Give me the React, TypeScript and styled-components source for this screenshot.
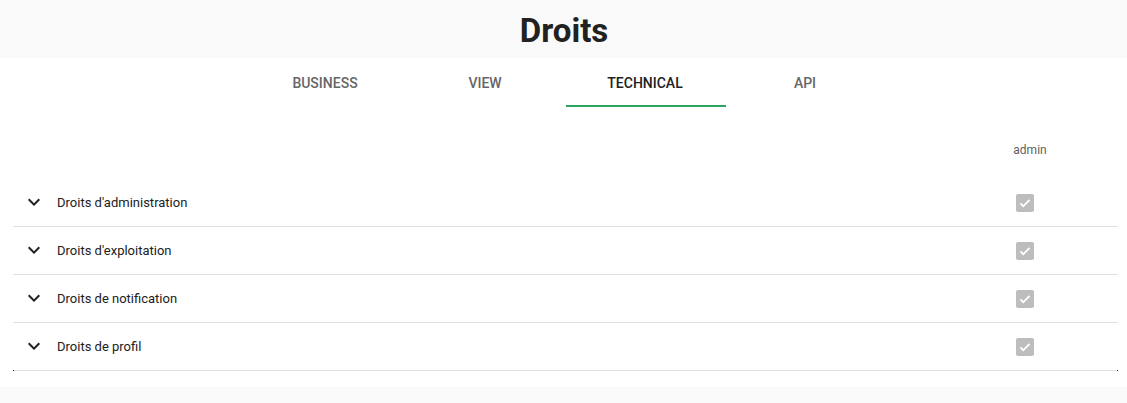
import React from "react";
import styled, { createGlobalStyle } from "styled-components";

const tabs = ["Business", "View", "Technical", "API"];
const rights = [
    "Droits d'administration",
    "Droits d'exploitation",
    "Droits de notification",
    "Droits de profil",
];

const GlobalStyle = createGlobalStyle`
  body {
    margin: 0;
    background: #fafafa;
    font-family: Roboto, "Liberation Sans", sans-serif;
  }
`;

const ExpandIcon = () => (
    <svg width="24" height="24" viewBox="0 0 24 24" fill="#212121">
        <path d="M16.59 8.59L12 13.17 7.41 8.59 6 10l6 6 6-6z" />
    </svg>
);

export default function App() {
    const active = 2;
    return (
        <>
            <GlobalStyle />
            <Header>
                <Title>Droits</Title>
            </Header>
            <Panel>
                <Tabs>
                    {tabs.map((tab, index) => (
                        <Tab key={tab} active={index === active}>{tab}</Tab>
                    ))}
                </Tabs>
                <Table>
                    <HeadRow>
                        <Spacer />
                        <ProfileCell>admin</ProfileCell>
                    </HeadRow>
                    {rights.map((right) => (
                        <Row key={right}>
                            <Label>
                                <ExpandIcon />
                                <span>{right}</span>
                            </Label>
                            <ProfileCell>
                                <Checkbox>
                                    <svg width="14" height="14" viewBox="0 0 24 24" fill="none" stroke="#fff" strokeWidth="3">
                                        <path d="M4 12.5l5 5L20 6.5" />
                                    </svg>
                                </Checkbox>
                            </ProfileCell>
                        </Row>
                    ))}
                    <TableEnd />
                </Table>
            </Panel>
        </>
    );
}

const Header = styled.header`
  height: 58px;
  display: flex;
  align-items: center;
  justify-content: center;
  background: #f9f9f9;
`;
const Title = styled.h1`
  margin: 0;
  padding: 3px 0 0 1px;
  font-size: 33px;
  font-weight: 700;
  color: #212121;
`;
const Panel = styled.main`
  background: #fff;
  padding-bottom: 16px;
`;
const Tabs = styled.nav`
  display: flex;
  justify-content: center;
  padding-left: 5px;
`;
const Tab = styled.div<{ active?: boolean }>`
  width: 160px;
  height: 49px;
  padding: 2px 2px 0 0;
  box-sizing: border-box;
  display: flex;
  align-items: center;
  justify-content: center;
  font-size: 14px;
  font-weight: 500;
  text-transform: uppercase;
  color: ${(p) => (p.active ? "#212121" : "#666")};
  border-bottom: 2px solid ${(p) => (p.active ? "#2aa55f" : "transparent")};
`;
const Table = styled.section`
  margin: 0 9px 0 13px;
`;
const HeadRow = styled.div`
  display: flex;
  height: 72px;
  align-items: flex-start;
  & > div {
    padding-top: 35px;
    font-size: 12px;
    line-height: 16px;
    color: #5f5f5f;
  }
`;
const Spacer = styled.div`
  flex: 1;
`;
const Row = styled.div`
  display: flex;
  align-items: center;
  height: 47px;
  border-bottom: 1px solid #e0e0e0;
  &:nth-last-child(2) {
    border-bottom: none;
  }
`;
const Label = styled.div`
  flex: 1;
  display: flex;
  align-items: center;
  gap: 11px;
  padding: 0 0 1px 9px;
  font-size: 13px;
  color: #212121;
`;
const ProfileCell = styled.div`
  width: 100px;
  margin-right: 38px;
  display: flex;
  justify-content: center;
`;
const Checkbox = styled.span`
  width: 18px;
  height: 18px;
  margin: 0 10px 0 0;
  border-radius: 2px;
  background: #bdbdbd;
  display: flex;
  align-items: center;
  justify-content: center;
`;
const TableEnd = styled.div`
  height: 1px;
  background: #e0e0e0;
  border-left: 1px solid #333;
  border-right: 1px solid #333;
`;
